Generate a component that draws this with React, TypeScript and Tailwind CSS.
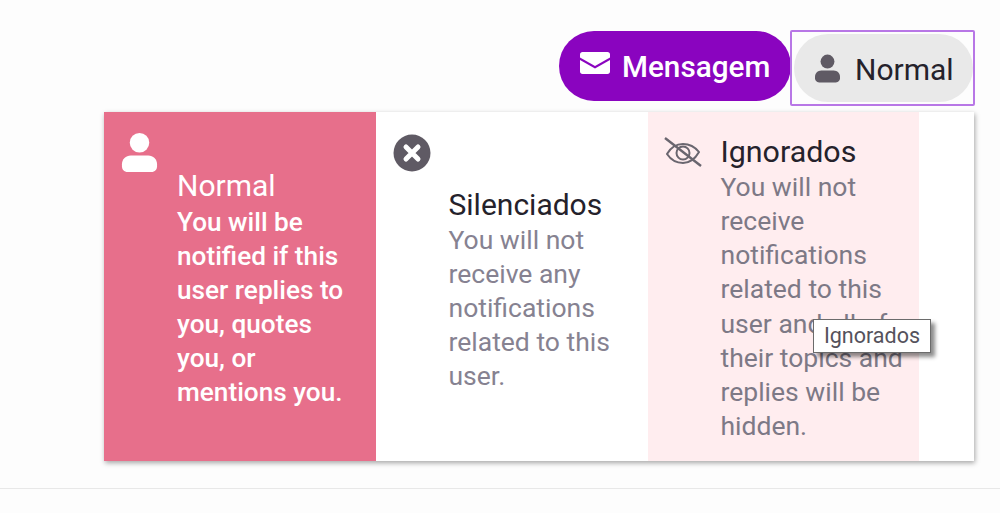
const font = { fontFamily: 'Roboto, sans-serif' }

function PersonIcon({ className }: { className: string }) {
  return (
    <svg viewBox="0 0 36 40" className={className} fill="currentColor" aria-hidden="true">
      <circle cx="18" cy="10" r="10" />
      <path d="M9 23h18c5 0 9 4 9 9v2c0 3-2 6-6 6H6c-4 0-6-3-6-6v-2c0-5 4-9 9-9Z" />
    </svg>
  )
}

function EnvelopeIcon() {
  return (
    <svg viewBox="0 0 30 22" className="w-[30px] h-[22px] mb-[6px]" fill="currentColor" aria-hidden="true">
      <path d="M2.500 0h25C29 0 30 1 30 2.500V5.500L15 14 0 5.500V2.500C0 1 1 0 2.500 0Z" />
      <path d="M0 8 15 16.500 30 8V19.500C30 21 29 22 27.500 22H2.500C1 22 0 21 0 19.500Z" />
    </svg>
  )
}

function CloseCircleIcon() {
  return (
    <svg viewBox="0 0 38 38" className="w-[38px] h-[38px] shrink-0" aria-hidden="true">
      <circle cx="19" cy="19" r="18.500" fill="#5f5a64" />
      <path d="M13 13l12 12M25 13 13 25" stroke="#fff" strokeWidth="5" strokeLinecap="round" />
    </svg>
  )
}

// oeil barré : contour, anneau intérieur et diagonale
function EyeSlashIcon() {
  return (
    <svg viewBox="0 0 38 36" className="w-[38px] h-[36px] shrink-0 text-[#6a666f]" fill="none" stroke="currentColor" aria-hidden="true">
      <path d="M3 19c4-7 10-10 16-10s12 3 16 8c-4 7-10 11-16 11S7 25 3 19Z" strokeWidth="2" />
      <circle cx="19" cy="18" r="6.500" strokeWidth="2" />
      <path d="M1 3 37 31" strokeWidth="2.400" />
    </svg>
  )
}

export default function App() {
  return (
    <div className="h-[513px] w-[1000px] overflow-hidden bg-[#fdfdfd]" style={font}>
      <div className="h-[488px] border-b border-[#e8e8e8] box-content">
        <div className="flex justify-end pt-[30px] pr-[25px]">
          <button className="flex items-center gap-[12px] h-[70px] w-[232px] pl-[21px] rounded-[35px] bg-[#8a04bf] text-white text-[29.700px] font-medium mt-px">
            <EnvelopeIcon />
            <span className="pt-[2px]">Mensagem</span>
          </button>
          <div className="h-[76px] w-[185px] border-[2px] border-[#b877e6] rounded-[2px] pl-[2px] py-[2px] -ml-px">
            <button className="flex items-center gap-[15px] w-full h-full pl-[21px] rounded-[34px] bg-[#e9e9e9] text-[#25222b] text-[30px]">
              <PersonIcon className="w-[25px] h-[29px] text-[#5f5a64]" />
              <span className="pt-[2px]">Normal</span>
            </button>
          </div>
        </div>

        <div className="relative ml-[104px] mt-[6px] w-[870px] h-[349px] bg-white flex shadow-[1px_2px_5px_rgba(0,0,0,0.35)]">
          <div className="w-[271.500px] bg-[#e76f8b] text-white flex pl-[17px] pt-[21px] gap-[19px]">
            <PersonIcon className="w-[37px] h-[39px] shrink-0" />
            <div className="pt-[36px] w-[180px]">
              <div className="text-[30px] leading-[34px] mb-[2px]">Normal</div>
              <p className="text-[26.200px] leading-[34px] font-medium">
                You will be notified if this user replies to you, quotes you, or mentions you.
              </p>
            </div>
          </div>

          <div className="w-[272px] flex pl-[17px] pt-[22px] gap-[18px]">
            <CloseCircleIcon />
            <div className="pt-[54px] w-[180px]">
              <div className="text-[30px] leading-[34px] mb-px text-[#25222b]">Silenciados</div>
              <p className="text-[26.500px] leading-[34px] text-[#868291]">
                You will not receive any notifications related to this user.
              </p>
            </div>
          </div>

          <div className="w-[271.500px] bg-[#ffedef] flex pl-[16px] pt-[23px] gap-[19px]">
            <EyeSlashIcon />
            <div className="w-[190px]">
              <div className="text-[30.400px] leading-[34px] mb-px text-[#25222b]">Ignorados</div>
              <p className="text-[26.500px] leading-[34.150px] text-[#7d7986]">
                You will not receive notifications related to this user and all of their topics and replies will be hidden.
              </p>
            </div>
          </div>

          <div className="absolute left-[709px] top-[207px] w-[118px] h-[34px] bg-white border border-[#6b6b6b] flex items-center justify-center text-[21.500px] text-[#55525c] shadow-[4px_4px_4px_rgba(0,0,0,0.45)]">
            Ignorados
          </div>
        </div>
      </div>
    </div>
  )
}
